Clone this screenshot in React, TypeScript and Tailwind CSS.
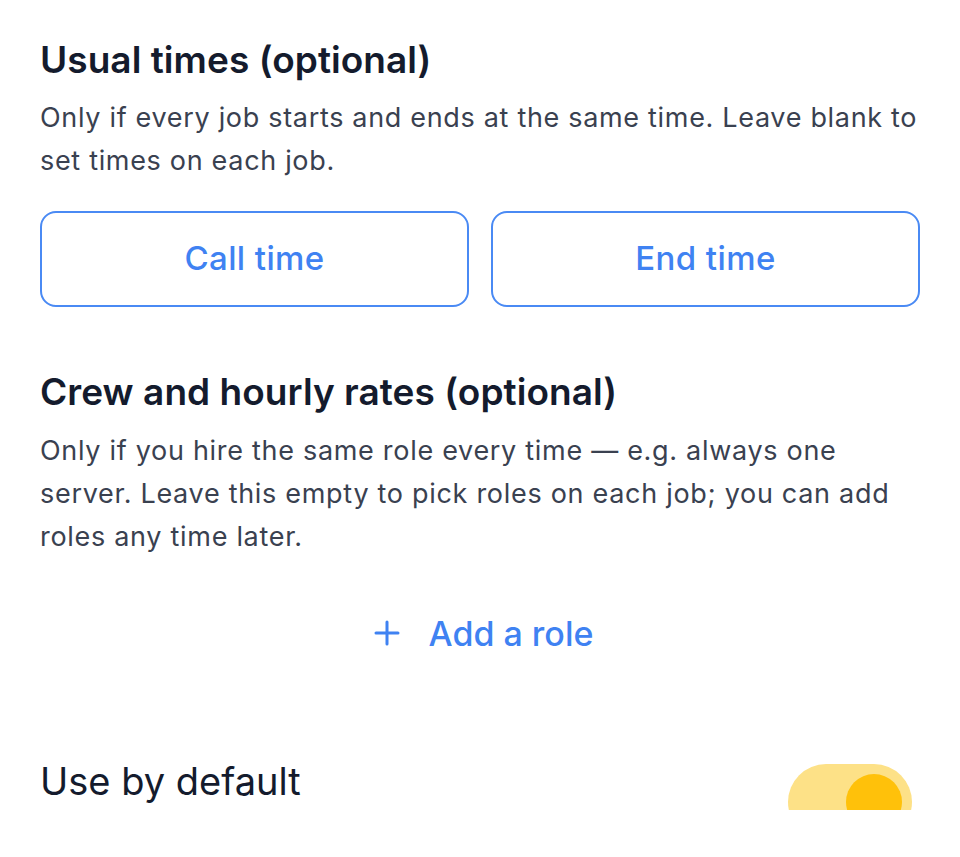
export default function App() {
  return (
    <div className="w-[960px] h-[857px] bg-white overflow-hidden" style={{ fontFamily: 'Inter, "Noto Sans", sans-serif' }}>
      <div className="h-[810px] overflow-hidden px-10 pt-[36px]">
        <h2 className="text-[37px] leading-[48px] font-semibold text-[#141b2d] tracking-[0.05px]">Usual times (optional)</h2>
        <p className="mt-[12px] text-[27px] leading-[43px] text-[#3a4150] tracking-[0.68px]">
          Only if every job starts and ends at the same time. Leave blank to set times on each job.
        </p>
        <div className="mt-[29px] grid grid-cols-2 gap-[22px]">
          <button className="h-[96px] rounded-[16px] border-2 border-[#4a8af4] text-[#3f82f2] text-[33px] font-medium tracking-[0.4px]">Call time</button>
          <button className="h-[96px] rounded-[16px] border-2 border-[#4a8af4] text-[#3f82f2] text-[33px] font-medium tracking-[0.4px]">End time</button>
        </div>
        <h2 className="mt-[61px] text-[37px] leading-[48px] font-semibold text-[#141b2d] tracking-[0.05px]">Crew and hourly rates (optional)</h2>
        <p className="mt-[13px] text-[27px] leading-[43px] text-[#3a4150] tracking-[0.7px]">
          Only if you hire the same role every time — e.g. always one server. Leave this empty to pick roles on each job; you can add roles any time later.
        </p>
        <div className="mt-[55px] h-[40px] pl-[7px] flex items-center justify-center gap-[29px] text-[#3f82f2]">
          <svg width="26" height="26" viewBox="0 0 26 26" fill="none" stroke="currentColor" strokeWidth="3" strokeLinecap="round">
            <path d="M13 2v22M2 13h22" />
          </svg>
          <span className="text-[34px] font-medium">Add a role</span>
        </div>
        <div className="mt-[111px] flex items-start justify-between pr-[8px]">
          <span className="mt-[-5px] text-[38px] leading-[44px] text-[#141b2d]">Use by default</span>
          <div className="relative w-[124px] h-[76px] rounded-full bg-[#fde187] flex items-center justify-end pr-[10px]">
            <div className="w-[56px] h-[56px] rounded-full bg-[#ffc10a]" />
          </div>
        </div>
      </div>
    </div>
  );
}
